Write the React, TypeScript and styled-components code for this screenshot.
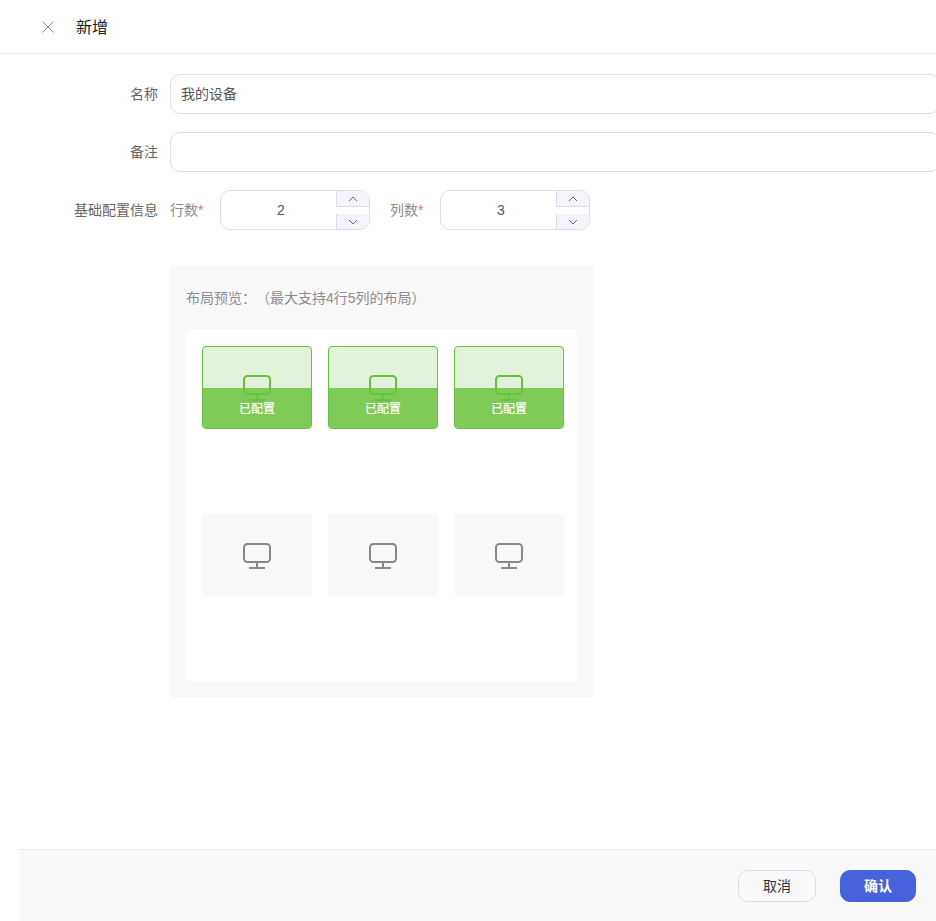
import React from 'react'
import styled, { createGlobalStyle } from 'styled-components'

const GlobalStyle = createGlobalStyle`
  html, body {
    margin: 0;
    padding: 0;
    background: #fff;
  }
  * {
    box-sizing: border-box;
  }
`

const Page = styled.div`
  width: 936px;
  height: 921px;
  display: flex;
  flex-direction: column;
  overflow: hidden;
  background: #fff;
  font-family: 'Liberation Sans', 'Noto Sans CJK SC', sans-serif;
  font-size: 14px;
  text-spacing-trim: space-all;
`

const Header = styled.header`
  height: 54px;
  flex: none;
  display: flex;
  align-items: center;
  gap: 22px;
  padding-left: 42px;
  border-bottom: 1px solid #eeeef1;
`

const CloseButton = styled.button`
  width: 12px;
  height: 12px;
  padding: 0;
  border: 0;
  background: none;
  display: flex;
  color: #8f8f94;
`

const Title = styled.h1`
  margin: 0;
  padding-bottom: 2px;
  font-size: 16px;
  font-weight: 400;
  color: #222;
`

const Form = styled.form`
  flex: 1;
  min-height: 0;
  display: flex;
  flex-direction: column;
  gap: 18px;
  padding-top: 20px;
`

const Row = styled.div`
  display: flex;
  align-items: center;
  gap: 12px;
`

const Label = styled.label`
  width: 158px;
  flex: none;
  padding-bottom: 2px;
  text-align: right;
  color: #666;
`

const TextInput = styled.input`
  width: 770px;
  flex: none;
  height: 40px;
  padding: 0 10px 2px;
  border: 1px solid #dcdce6;
  border-radius: 10px;
  outline: none;
  background: #fff;
  font: inherit;
  color: #555;
`

const Steppers = styled.div`
  display: flex;
  align-items: center;
  gap: 20px;
`

const StepperField = styled.div`
  display: flex;
  align-items: center;
  gap: 16px;
`

const StepperLabel = styled.span`
  width: 34px;
  padding-bottom: 2px;
  color: #8c8c8c;
  white-space: nowrap;

  i {
    font-style: normal;
    color: #f56c6c;
  }
`

const Stepper = styled.div`
  position: relative;
  width: 150px;
  height: 40px;
  border: 1px solid #dcdce6;
  border-radius: 10px;
  overflow: hidden;
`

const StepperInput = styled.input`
  width: 100%;
  height: 100%;
  padding: 0 28px 0 0;
  border: 0;
  outline: none;
  background: none;
  text-align: center;
  font: inherit;
  color: #555;
`

const StepButton = styled.span<{ $down?: boolean }>`
  position: absolute;
  right: 0;
  width: 33px;
  height: ${({ $down }) => ($down ? '15px' : '16px')};
  ${({ $down }) => ($down ? 'bottom: 0;' : 'top: 0;')}
  display: flex;
  align-items: center;
  justify-content: center;
  background: #f4f5fa;
  border-left: 1px solid #dcdce6;
  ${({ $down }) => ($down ? '' : 'border-bottom: 1px solid #dcdce6;')}
  color: #666;
`

const Preview = styled.section`
  width: 424px;
  height: 432px;
  margin: 18px 0 0 170px;
  padding: 16px;
  flex: none;
  display: flex;
  flex-direction: column;
  border-radius: 4px;
  background: #f9f9fc;
`

const PreviewTitle = styled.div`
  height: 32px;
  flex: none;
  margin-bottom: 16px;
  padding-bottom: 2px;
  display: flex;
  align-items: center;
  color: #8c8c8c;
`

const PreviewGrid = styled.div`
  flex: 1;
  min-height: 0;
  display: grid;
  grid-template-columns: repeat(3, 110px);
  grid-auto-rows: 160px;
  gap: 8px 16px;
  padding: 16px 16px 8px;
  border-radius: 6px;
  background: #fff;
`

const Cell = styled.div<{ $configured?: boolean }>`
  position: relative;
  height: ${({ $configured }) => ($configured ? '83px' : '82px')};
  display: flex;
  align-items: center;
  justify-content: center;
  overflow: hidden;
  border-radius: 4px;
  background: ${({ $configured }) => ($configured ? '#e3f2da' : '#f9f9f9')};
  border: ${({ $configured }) => ($configured ? '1px solid #67c23a' : '0')};
  color: ${({ $configured }) => ($configured ? '#67c23a' : '#88888c')};
`

const CellStatus = styled.div`
  position: absolute;
  left: 0;
  right: 0;
  bottom: 0;
  height: 40px;
  display: flex;
  align-items: center;
  justify-content: center;
  padding-bottom: 2px;
  background: rgba(106, 196, 62, 0.84);
  color: #fff;
  font-size: 12px;
  font-weight: 500;
`

const Footer = styled.footer`
  height: 72px;
  flex: none;
  margin-left: 20px;
  display: flex;
  align-items: center;
  justify-content: flex-end;
  gap: 24px;
  padding-right: 20px;
  border-top: 1px solid #e6e6e9;
  background: #f9f9fc;
`

const Button = styled.button<{ $primary?: boolean }>`
  height: 32px;
  width: ${({ $primary }) => ($primary ? '76px' : '78px')};
  padding: 0 0 2px;
  border-radius: 10px;
  border: 1px solid ${({ $primary }) => ($primary ? '#4662dc' : '#dcdce0')};
  background: ${({ $primary }) => ($primary ? '#4662dc' : 'transparent')};
  color: ${({ $primary }) => ($primary ? '#fff' : '#333')};
  font: inherit;
  font-weight: ${({ $primary }) => ($primary ? 700 : 400)};
`

const CloseIcon = () => (
  <svg width="12" height="12" viewBox="0 0 12 12" fill="none" stroke="currentColor" strokeWidth="1">
    <path d="M0.5 0.5l11 11M11.5 0.5l-11 11" />
  </svg>
)

const Chevron = ({ down }: { down?: boolean }) => (
  <svg width="10" height="6" viewBox="0 0 10 6" fill="none" stroke="currentColor" strokeWidth="1">
    <path d={down ? 'M1 1l4 4 4-4' : 'M1 5l4-4 4 4'} />
  </svg>
)

const MonitorIcon = () => (
  <svg width="28" height="27" viewBox="0 0 28 27" fill="none" stroke="currentColor" strokeWidth="2">
    <rect x="1" y="2" width="26" height="18" rx="3.5" />
    <path d="M14 20v6M6 26h16" />
  </svg>
)

const StepperBox = ({ label, value }: { label: string; value: number }) => (
  <StepperField>
    <StepperLabel>
      {label}
      <i>*</i>
    </StepperLabel>
    <Stepper>
      <StepperInput defaultValue={value} />
      <StepButton>
        <Chevron />
      </StepButton>
      <StepButton $down>
        <Chevron down />
      </StepButton>
    </Stepper>
  </StepperField>
)

const cells = [true, true, true, false, false, false]

export default function App() {
  return (
    <Page>
      <GlobalStyle />
      <Header>
        <CloseButton type="button">
          <CloseIcon />
        </CloseButton>
        <Title>新增</Title>
      </Header>
      <Form>
        <Row>
          <Label>名称</Label>
          <TextInput defaultValue="我的设备" />
        </Row>
        <Row>
          <Label>备注</Label>
          <TextInput />
        </Row>
        <Row>
          <Label>基础配置信息</Label>
          <Steppers>
            <StepperBox label="行数" value={2} />
            <StepperBox label="列数" value={3} />
          </Steppers>
        </Row>
        <Preview>
          <PreviewTitle>布局预览：（最大支持4行5列的布局）</PreviewTitle>
          <PreviewGrid>
            {cells.map((configured, i) => (
              <Cell key={i} $configured={configured}>
                <MonitorIcon />
                {configured && <CellStatus>已配置</CellStatus>}
              </Cell>
            ))}
          </PreviewGrid>
        </Preview>
      </Form>
      <Footer>
        <Button type="button">取消</Button>
        <Button type="button" $primary>
          确认
        </Button>
      </Footer>
    </Page>
  )
}
